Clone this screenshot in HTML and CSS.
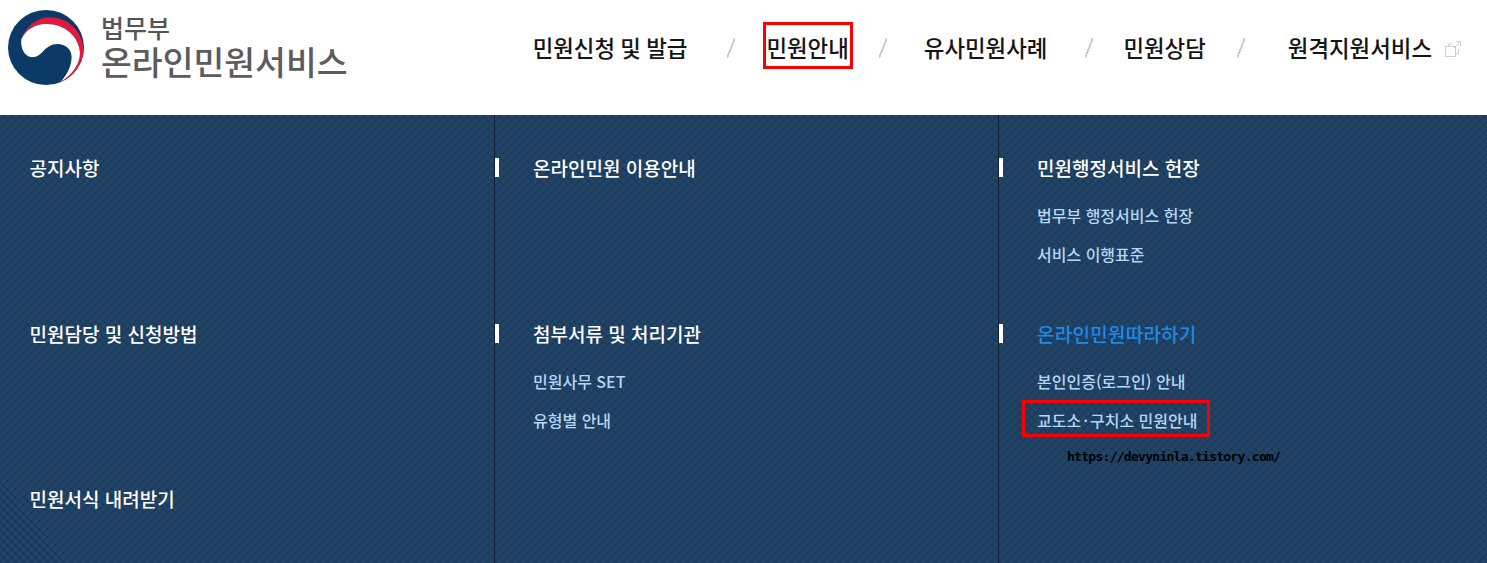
FILE: index.html
```html
<!DOCTYPE html>
<html lang="ko">
<head>
<meta charset="utf-8">
<title>온라인민원서비스</title>
<link rel="stylesheet" href="styles.css">
</head>
<body>
<header class="header">
  <a class="logo">
    <svg class="logo-mark" viewBox="0 0 227 227" width="76" height="75" preserveAspectRatio="none">
      <circle cx="113.500" cy="113.500" r="113.500" fill="#0b3a66"/>
      <path d="M40 88C55 45 90 22 125 22C175 22 222 60 226 120A113.500 113.500 0 0 1 155 219C195 195 215 160 215 130C212 80 170 42 115 42C80 42 52 60 40 88Z" fill="#e4173e"/>
      <path d="M40 88C52 60 80 42 115 42C170 42 212 80 215 130C215 160 195 195 155 219C175 200 190 170 190 142C190 118 170 103 148 103C125 103 112 118 100 130C90 140 80 143 72 143C50 143 36 115 40 88Z" fill="#fff"/>
    </svg>
    <div class="logo-text">
      <span class="logo-org">법무부</span>
      <span class="logo-name">온라인민원서비스</span>
    </div>
  </a>
  <nav class="nav">
    <a class="nav-item">민원신청 및 발급</a>
    <span class="slash"></span>
    <a class="nav-item nav-marked">민원안내</a>
    <span class="slash"></span>
    <a class="nav-item">유사민원사례</a>
    <span class="slash"></span>
    <a class="nav-item">민원상담</a>
    <span class="slash"></span>
    <a class="nav-item">원격지원서비스</a>
    <svg class="ext" viewBox="0 0 16 16" width="16" height="16" fill="none" stroke="#cfcfcf" stroke-width="1">
      <path d="M.5 5.500H10.500V15.500H.5Z"/>
      <path d="M3.500 5V3H7M9 7L15 1M11 .5H15.500V5M13.500 8V12.500H11"/>
    </svg>
  </nav>
</header>
<main class="panel">
  <section class="col col-first">
    <div class="group"><h2>공지사항</h2></div>
    <div class="group"><h2>민원담당 및 신청방법</h2></div>
    <div class="group"><h2>민원서식 내려받기</h2></div>
  </section>
  <section class="col">
    <div class="group"><h2>온라인민원 이용안내</h2></div>
    <div class="group"><h2>첨부서류 및 처리기관</h2>
      <ul><li>민원사무 SET</li><li>유형별 안내</li></ul>
    </div>
  </section>
  <section class="col">
    <div class="group"><h2>민원행정서비스 헌장</h2>
      <ul><li>법무부 행정서비스 헌장</li><li>서비스 이행표준</li></ul>
    </div>
    <div class="group"><h2 class="active">온라인민원따라하기</h2>
      <ul><li>본인인증(로그인) 안내</li><li><span class="marked-link">교도소<span class="dot">·</span>구치소 민원안내</span></li></ul>
      <p class="watermark">https://devyninla.tistory.com/</p>
    </div>
  </section>
</main>
</body>
</html>
```
FILE: styles.css
```css
* { box-sizing: border-box; }
html, body { margin: 0; padding: 0; }
body {
  width: 1487px;
  height: 563px;
  overflow: hidden;
  background: #fff;
  font-family: "Noto Sans CJK KR", "Noto Sans", sans-serif;
}
.header {
  height: 115px;
  display: flex;
  justify-content: space-between;
  padding: 10px 26px 0 8px;
}
.logo { display: flex; gap: 17px; height: 76px; }
.logo-text { display: flex; flex-direction: column; color: #555; padding-top: 2px; }
.logo-org { font-size: 25px; line-height: 30px; font-weight: 500; }
.logo-name { font-size: 33.500px; line-height: 38px; font-weight: 500; color: #5c5c5c; }
.nav { display: flex; align-items: flex-start; padding-top: 21px; color: #151515; }
.nav-item { font-size: 22.400px; line-height: 32px; font-weight: 500; word-spacing: -1px; }
.slash {
  width: 8px;
  height: 20px;
  margin-top: 7px;
  background: linear-gradient(to bottom right, transparent 44%, #c9c9c9 44%, #c9c9c9 56%, transparent 56%);
}
.slash:nth-of-type(1) { margin-left: 40px; margin-right: 31px; }
.slash:nth-of-type(2) { margin-left: 30px; margin-right: 37px; }
.slash:nth-of-type(3) { margin-left: 38px; margin-right: 30px; }
.slash:nth-of-type(4) { margin-left: 31px; margin-right: 43px; }
.nav-marked { position: relative; }
.nav-marked::after {
  content: "";
  position: absolute;
  left: -3px;
  right: -4px;
  top: -9px;
  bottom: -6px;
  border: 3px solid #f00;
}
.ext { margin: 10px 0 0 13px; }
.panel {
  height: 448px;
  display: grid;
  grid-template-columns: 494px 504px 489px;
  background-color: #214467;
  background-image:
    repeating-linear-gradient(45deg, rgba(10,30,55,.2) 0 2px, transparent 2px 5.657px),
    repeating-linear-gradient(-45deg, rgba(10,30,55,.2) 0 2px, transparent 2px 5.657px);
}
.col { padding-left: 38px; border-left: 1px solid #101f33; }
.col-first { padding-left: 29.500px; border-left: 0; }
.group { position: relative; height: 165.500px; padding-top: 38px; }
.group:nth-child(3) { height: auto; }
.group h2 {
  margin: 0;
  font-size: 19px;
  line-height: 30px;
  font-weight: 500;
  color: #fff;
}
.col:not(.col-first) h2::before {
  content: "";
  position: absolute;
  left: -38px;
  top: 43px;
  width: 4px;
  height: 19px;
  background: #fff;
}
.group h2.active { color: #1e8ae6; letter-spacing: .25px; }
ul { list-style: none; margin: 21px 0 0; padding: 0; }
li { font-size: 16px; line-height: 22px; margin-bottom: 17px; color: #b6d6f2; font-weight: 500; }
.marked-link { position: relative; display: inline-block; }
.marked-link::after {
  content: "";
  position: absolute;
  left: -15px;
  right: -12px;
  top: -9px;
  bottom: -6px;
  border: 3px solid #f00;
}
.dot { margin: 0 2px; }
.watermark {
  position: absolute;
  left: 30px;
  top: 168px;
  margin: 0;
  font-family: "DejaVu Sans Mono", monospace;
  font-weight: 700;
  font-size: 13px;
  line-height: 16px;
  color: #000;
  letter-spacing: -.72px;
}
```
